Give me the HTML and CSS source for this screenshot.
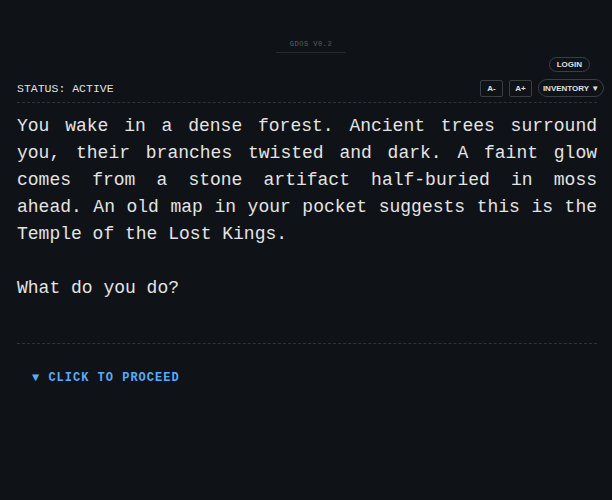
FILE: index.html
```html
<!DOCTYPE html>
<html>
<head>
<meta charset="utf-8">
<link rel="stylesheet" href="styles.css">
</head>
<body>
<div class="app">
  <header class="top">
    <div class="brand">GDOS V0.2</div>
    <div class="login-row"><button class="pill">LOGIN</button></div>
  </header>
  <div class="status-row">
    <div class="status">STATUS: ACTIVE</div>
    <div class="controls">
      <button class="sq">A-</button>
      <button class="sq">A+</button>
      <button class="pill inv">INVENTORY ▼</button>
    </div>
  </div>
  <div class="rule"></div>
  <main class="story">
    <p>You wake in a dense forest. Ancient trees surround you, their branches twisted and dark. A faint glow comes from a stone artifact half-buried in moss ahead. An old map in your pocket suggests this is the Temple of the Lost Kings.</p>
    <p>What do you do?</p>
  </main>
  <div class="proceed">▼ CLICK TO PROCEED</div>
</div>
</body>
</html>
```

FILE: styles.css
```css
html, body {
  margin: 0;
  padding: 0;
  background: #0f1317;
}
.app {
  padding: 0 15px 0 17px;
  color: #e4e4e4;
  font-family: "Courier New", Courier, "Liberation Mono", monospace;
}
.top {
  display: flex;
  flex-direction: column;
  align-items: center;
  padding-top: 40px;
}
.brand {
  font-size: 7px;
  color: #5a5f66;
  letter-spacing: 0.5px;
  padding: 0 14px 3px;
  margin-left: 8px;
  border-bottom: 1px solid #262b30;
  line-height: 9px;
}
.login-row {
  align-self: stretch;
  display: flex;
  justify-content: flex-end;
  margin-top: 4px;
  padding-right: 7px;
}
.pill {
  font-family: "Liberation Sans", Arial, sans-serif;
  font-weight: bold;
  font-size: 8px;
  color: #e0e0e0;
  background: transparent;
  border: 1px solid #3a3f45;
  border-radius: 8px;
  padding: 0 7px;
  height: 15px;
  line-height: 13px;
  cursor: pointer;
}
.status-row {
  display: flex;
  justify-content: space-between;
  align-items: center;
  margin-top: 7px;
  margin-right: -7px;
  padding-bottom: 5px;
}
.rule {
  border-bottom: 1px dashed #2e3338;
}
.status {
  font-size: 11.5px;
  color: #e0e0e0;
}
.controls {
  display: flex;
  gap: 6px;
  align-items: center;
}
.sq {
  font-family: "Liberation Sans", Arial, sans-serif;
  font-weight: bold;
  font-size: 8px;
  color: #e0e0e0;
  background: transparent;
  border: 1px solid #3a3f45;
  border-radius: 2px;
  width: 23px;
  height: 17px;
  padding: 0;
}
.inv {
  height: 18px;
  width: 66px;
  border-radius: 9px;
  padding: 0;
}
.story {
  font-size: 18px;
  line-height: 27px;
  text-align: justify;
  padding: 0 0 41px;
  border-bottom: 1px dashed #2e3338;
}
.story p {
  margin: 10px 0 0;
}
.story p + p {
  margin-top: 27px;
}
.proceed {
  padding: 27px 15px;
  color: #5aabf5;
  font-weight: bold;
  font-size: 12px;
  letter-spacing: 1px;
}
```
